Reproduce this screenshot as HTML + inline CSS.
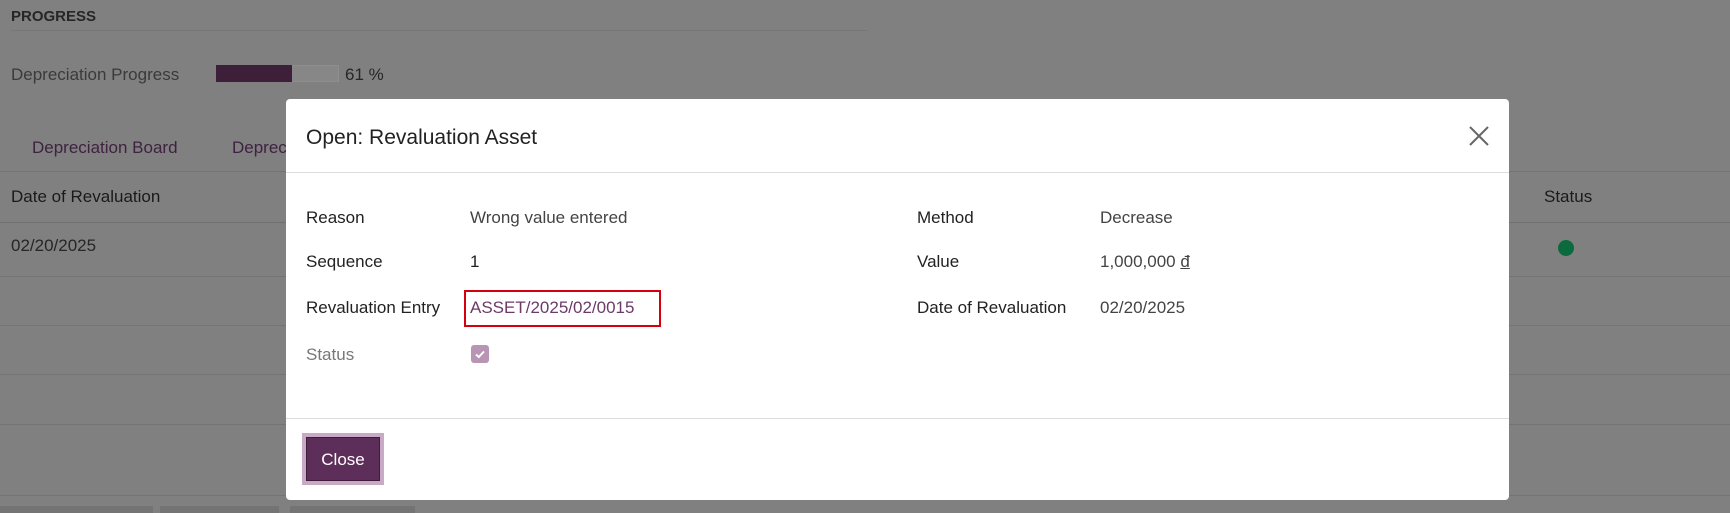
<!DOCTYPE html>
<html><head><meta charset="utf-8"><style>
*{box-sizing:border-box;margin:0;padding:0}
body{width:1730px;height:513px;overflow:hidden;background:#808080;font-family:"Liberation Sans",sans-serif;color:#1f1f1f;position:relative}
.a{position:absolute;white-space:nowrap}
.ln{position:absolute;left:0;height:1px;background:#747474}
.m{position:absolute;left:286px;top:99px;width:1223px;height:401px;background:#fff;border-radius:4px}
.lb{position:absolute;font-size:17px;color:#222}
.v{position:absolute;font-size:17px;color:#444}
</style></head><body>
<div class="a" style="left:11px;top:8px;font-size:15px;font-weight:bold;color:#262626">PROGRESS</div>
<div class="ln" style="left:11px;top:30px;width:857px;background:#777"></div>
<div class="a" style="left:11px;top:65px;font-size:17px;color:#3a3a3a">Depreciation Progress</div>
<div class="a" style="left:216px;top:65px;width:123px;height:17px;background:#878787;border:1px solid #8e8e8e"></div>
<div class="a" style="left:216px;top:65px;width:76px;height:17px;background:#3e1f3a"></div>
<div class="a" style="left:345px;top:65px;font-size:17px;color:#262626">61 %</div>
<div class="a" style="left:32px;top:138px;font-size:17px;color:#3e2240">Depreciation Board</div>
<div class="a" style="left:232px;top:138px;font-size:17px;color:#3e2240">Depreciation</div>
<div class="ln" style="top:171px;width:1730px"></div>
<div class="a" style="left:11px;top:187px;font-size:17px;color:#1a1a1a">Date of Revaluation</div>
<div class="a" style="left:1544px;top:187px;font-size:17px;color:#1a1a1a">Status</div>
<div class="ln" style="top:222px;width:1730px;background:#707070"></div>
<div class="a" style="left:11px;top:236px;font-size:17px;color:#262626">02/20/2025</div>
<div class="a" style="left:1558px;top:240px;width:16px;height:16px;border-radius:50%;background:#0b6b3e"></div>
<div class="ln" style="top:276px;width:1730px"></div>
<div class="ln" style="top:325px;width:1730px"></div>
<div class="ln" style="top:374px;width:1730px"></div>
<div class="ln" style="top:424px;width:1730px"></div>
<div class="ln" style="top:495px;width:1730px"></div>
<div class="a" style="left:0;top:506px;width:153px;height:7px;background:#747474"></div>
<div class="a" style="left:160px;top:506px;width:119px;height:7px;background:#747474"></div>
<div class="a" style="left:290px;top:506px;width:125px;height:7px;background:#747474"></div>

<div class="m">
<div class="a" style="left:20px;top:27px;font-size:21px;color:#222">Open: Revaluation Asset</div>
<svg class="a" style="left:1182px;top:26px" width="22" height="22" viewBox="0 0 22 22"><path d="M2 2L20 20M20 2L2 20" stroke="#666" stroke-width="2"/></svg>
<div class="a" style="left:0;top:73px;width:1223px;height:1px;background:#dcdcdc"></div>
<div class="lb" style="left:20px;top:109px">Reason</div>
<div class="v" style="left:184px;top:109px">Wrong value entered</div>
<div class="lb" style="left:20px;top:153px">Sequence</div>
<div class="v" style="left:184px;top:153px;color:#222">1</div>
<div class="lb" style="left:20px;top:199px">Revaluation Entry</div>
<div class="a" style="left:178px;top:191px;width:197px;height:37px;border:2px solid #d4000e"></div>
<div class="v" style="left:184px;top:199px;color:#6b3a68">ASSET/2025/02/0015</div>
<div class="lb" style="left:20px;top:246px;color:#777">Status</div>
<div class="a" style="left:185px;top:246px;width:18px;height:18px;border-radius:3px;background:#b894b5"><svg width="18" height="18" viewBox="0 0 18 18"><path d="M5 9.5L7.8 12L13 6.5" stroke="#fff" stroke-width="2" fill="none"/></svg></div>
<div class="lb" style="left:631px;top:109px">Method</div>
<div class="v" style="left:814px;top:109px">Decrease</div>
<div class="lb" style="left:631px;top:153px">Value</div>
<div class="v" style="left:814px;top:153px">1,000,000 <span style="text-decoration:underline">đ</span></div>
<div class="lb" style="left:631px;top:199px">Date of Revaluation</div>
<div class="v" style="left:814px;top:199px">02/20/2025</div>
<div class="a" style="left:0;top:319px;width:1223px;height:1px;background:#dcdcdc"></div>
<div class="a" style="left:16px;top:334px;width:82px;height:52px;background:#c8a9c6"></div>
<div class="a" style="left:20px;top:338px;width:74px;height:44px;background:#5e2e5a;border:1px solid #3e1d3b;color:#fff;font-size:17px;line-height:43px;text-align:center">Close</div>
</div>
</body></html>
